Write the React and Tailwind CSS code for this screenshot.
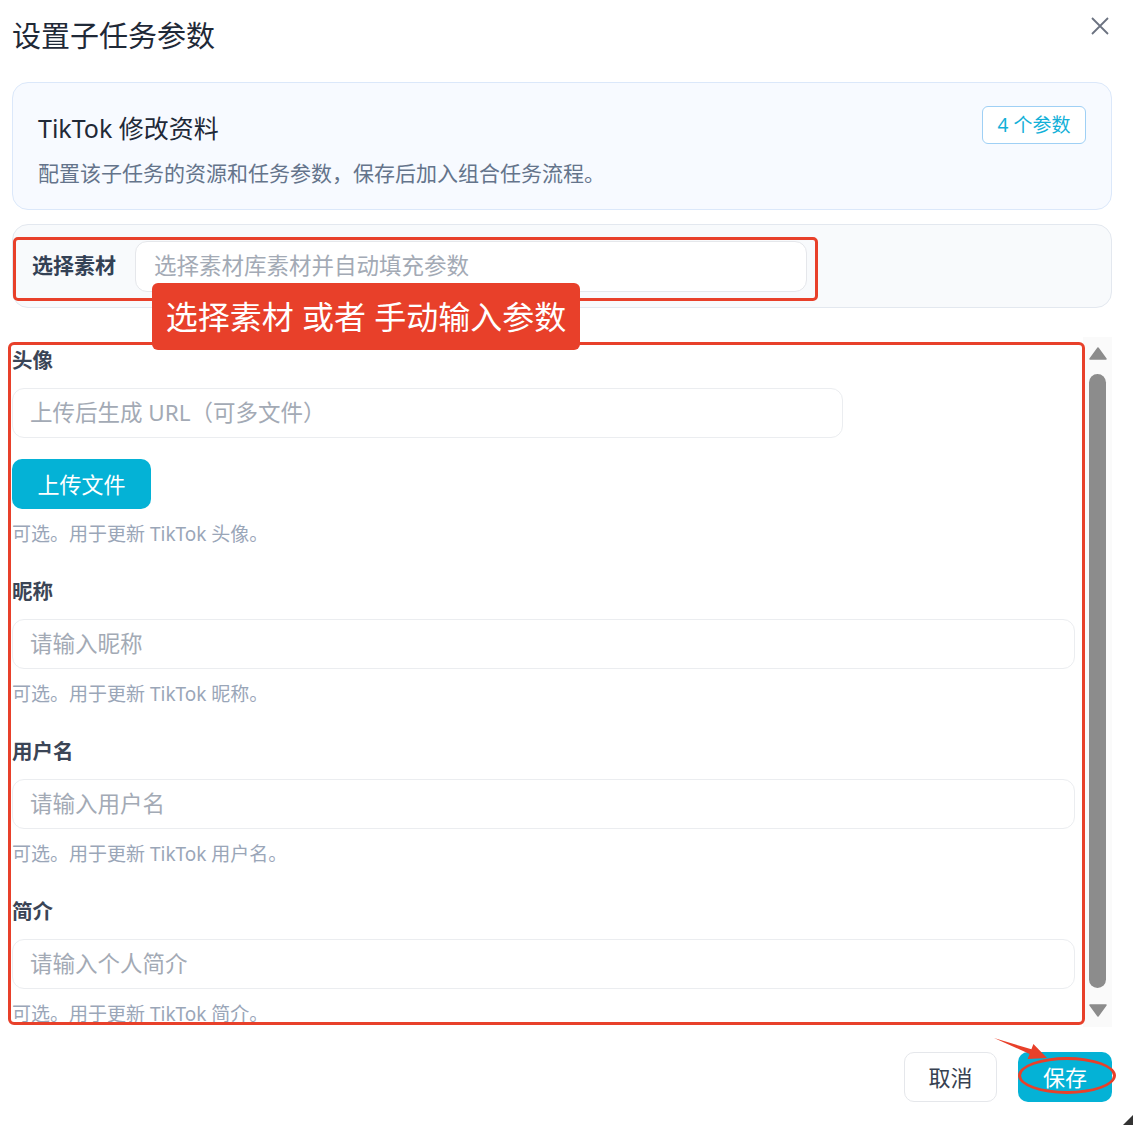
const FONT = { fontFamily: '"Noto Sans", "Noto Sans CJK SC", sans-serif' };

const fields = [
  { label: '头像', placeholder: '上传后生成 URL（可多文件）', help: '可选。用于更新 TikTok 头像。', upload: true },
  { label: '昵称', placeholder: '请输入昵称', help: '可选。用于更新 TikTok 昵称。' },
  { label: '用户名', placeholder: '请输入用户名', help: '可选。用于更新 TikTok 用户名。' },
  { label: '简介', placeholder: '请输入个人简介', help: '可选。用于更新 TikTok 简介。' },
];

const Field = ({ label, placeholder, help, upload }) => (
  <div className="mb-[30px]">
    <div className="text-[20.5px] leading-[28px] font-bold text-[#3b4556] mb-[14px]">{label}</div>
    <div
      className={
        'h-[50px] rounded-[12px] border border-[#ebedf0] bg-white flex items-center px-[17px] text-[22.5px] text-[#a3aab5] ' +
        (upload ? 'w-[831px]' : 'w-full')
      }
    >
      {placeholder}
    </div>
    {upload && (
      <button className="mt-[21px] h-[50px] w-[139px] rounded-[10px] bg-[#04b2d6] text-white text-[22px]">
        上传文件
      </button>
    )}
    <div className="mt-[12px] text-[19px] leading-[26px] text-[#9aa6b8]">{help}</div>
  </div>
);

const App = () => {
  return (
    <div className="relative min-h-screen bg-white pl-[12px] pr-[21px] pt-[18px]" style={FONT}>
      {/* header */}
      <div className="flex items-start justify-between">
        <h1 className="text-[29px] leading-[36px] text-[#1f2937]">设置子任务参数</h1>
        <svg width="18" height="18" viewBox="0 0 18 18" className="mr-[3px] mt-[-1px]">
          <path d="M1 1 L17 17 M17 1 L1 17" stroke="#6b7280" strokeWidth="1.8" fill="none" />
        </svg>
      </div>

      {/* info card */}
      <div className="mt-[28px] h-[128px] rounded-[16px] border border-[#dbe8fa] bg-[#f7faff] px-[25px] pt-[23px] flex justify-between items-start">
        <div className="pt-[6px]">
          <div className="text-[25px] leading-[32px] text-[#1f2937]">TikTok 修改资料</div>
          <div className="mt-[15px] text-[21px] leading-[28px] text-[#64748b]">
            配置该子任务的资源和任务参数，保存后加入组合任务流程。
          </div>
        </div>
        <div className="h-[38px] w-[104px] rounded-[6px] border border-[#9fd0f5] bg-white flex items-center justify-center text-[19px] text-[#12b0d8]">
          4 个参数
        </div>
      </div>

      {/* material selector */}
      <div className="mt-[14px] h-[84px] rounded-[16px] border border-[#e3e8ef] bg-[#f8fafc] flex items-center pl-[19px]">
        <span className="text-[21px] font-bold text-[#334155]">选择素材</span>
        <div className="ml-[19px] h-[51px] w-[672px] rounded-[12px] border border-[#e5e7eb] bg-white flex items-center px-[18px] text-[22.5px] text-[#a3aab5]">
          选择素材库素材并自动填充参数
        </div>
      </div>

      {/* scroll area */}
      <div className="mt-[29px] h-[690px] flex">
        <div className="flex-1 overflow-hidden pt-[9px] pr-[8px]">
          {fields.map((f) => (
            <Field key={f.label} {...f} />
          ))}
        </div>
        <div className="w-[29px] bg-[#fafafa] flex flex-col items-center pt-[10px] pb-[10px]">
          <svg width="18" height="13" viewBox="0 0 18 13">
            <path d="M9 1 L17 12 L1 12 Z" fill="#8c8c8c" stroke="#8c8c8c" strokeLinejoin="round" strokeWidth="1.5" />
          </svg>
          <div className="mt-[14px] flex-1 w-[17px] rounded-full bg-[#8c8c8c]" />
          <svg width="18" height="13" viewBox="0 0 18 13" className="mt-[16px]">
            <path d="M1 1 L17 1 L9 12 Z" fill="#8c8c8c" stroke="#8c8c8c" strokeLinejoin="round" strokeWidth="1.5" />
          </svg>
        </div>
      </div>

      {/* footer */}
      <div className="mt-[25px] flex justify-end gap-[21px]">
        <button className="h-[50px] w-[93px] rounded-[10px] border border-[#e5e7eb] bg-white text-[22px] text-[#374151]">
          取消
        </button>
        <button className="h-[50px] w-[94px] rounded-[10px] bg-[#04b2d6] text-[22px] text-white">保存</button>
      </div>

      {/* annotations */}
      <div className="absolute left-[13px] top-[237px] w-[805px] h-[64px] border-[3px] border-[#e8402a] rounded-[5px]" />
      <div className="absolute left-[152px] top-[283px] w-[428px] h-[67px] rounded-[6px] bg-[#e8402a] flex items-center justify-center text-[32px] text-white">
        选择素材 或者 手动输入参数
      </div>
      <div className="absolute left-[8px] top-[342px] w-[1077px] h-[683px] border-[3px] border-[#e8402a] rounded-[6px]" />
      <div className="absolute left-[1018px] top-[1057px] w-[98px] h-[37px] border-[3px] border-[#e8402a] rounded-[50%]" />
      <svg className="absolute left-[990px] top-[1030px]" width="62" height="34" viewBox="0 0 62 34">
        <polygon points="4,8 41.4,19.3 43.4,14.1 57,28 37.6,29.1 39.6,23.9" fill="#e8402a" />
      </svg>
      <svg className="absolute left-[1123px] top-[1115px]" width="10" height="10" viewBox="0 0 10 10">
        <polygon points="10,0 10,10 0,10" fill="#333" />
      </svg>
    </div>
  );
};

export default App;
